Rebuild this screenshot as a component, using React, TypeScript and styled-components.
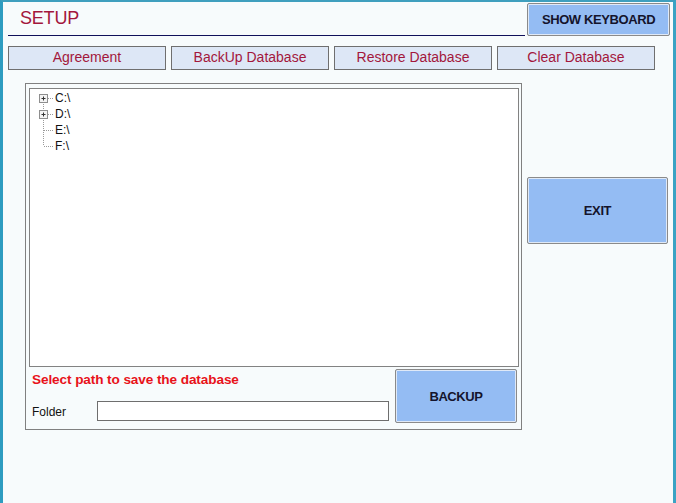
import React from 'react';
import styled, { createGlobalStyle } from 'styled-components';

const GlobalStyle = createGlobalStyle`
  html, body {
    margin: 0;
    padding: 0;
    background: #f7fafc;
  }
  * {
    box-sizing: border-box;
  }
`;

const ACCENT = '#a3173c';
const BUTTON_BLUE = '#94bcf3';

const Frame = styled.div`
  width: 676px;
  height: 503px;
  background: #f7fbfc;
  border-left: 3px solid #2e9cc0;
  border-right: 3px solid #3aa3c4;
  border-top: 2px solid #3f9fbe;
  font-family: 'Liberation Sans', Arial, sans-serif;
  display: flex;
  flex-direction: column;
`;

const Header = styled.div`
  display: flex;
  padding: 1px 0 0 5px;
`;

const TitleBlock = styled.div`
  width: 517px;
  height: 33px;
  border-bottom: 1px solid #10105a;
  padding: 5px 0 0 12px;
`;

const Title = styled.h1`
  margin: 0;
  color: ${ACCENT};
  font-size: 18px;
  font-weight: 400;
  letter-spacing: -0.2px;
`;

const BlueButton = styled.button<{ w: number; h: number }>`
  width: ${(p) => p.w}px;
  height: ${(p) => p.h}px;
  background: ${BUTTON_BLUE};
  border: 1px solid #8a8a8a;
  border-radius: 2px;
  box-shadow: inset 0 0 0 1px #dfe9f7;
  font-family: 'Liberation Sans', Arial, sans-serif;
  font-weight: 700;
  font-size: 13px;
  letter-spacing: -0.4px;
  color: #14142c;
  padding: 0;
  flex-shrink: 0;
`;

const KeyboardButton = styled(BlueButton)`
  margin-left: 2px;
`;

const Tabs = styled.div`
  display: flex;
  gap: 5px;
  padding-left: 5px;
  margin-top: 10px;
`;

const Tab = styled.button`
  width: 158px;
  height: 24px;
  background: #dde7f6;
  border: 1px solid #6f6f6f;
  color: ${ACCENT};
  font-family: 'Liberation Sans', Arial, sans-serif;
  font-size: 14px;
  padding: 0 0 3px;
`;

const Content = styled.div`
  display: flex;
  align-items: flex-start;
  margin-top: 13px;
  padding-left: 22px;
`;

const GroupBox = styled.div`
  width: 497px;
  height: 347px;
  border: 1px solid #808080;
  padding: 4px 2px 0 3px;
`;

const TreeBox = styled.div`
  width: 490px;
  height: 279px;
  background: #ffffff;
  border: 1px solid #828282;
  padding: 1px 0 0 5px;
`;

const TreeRow = styled.div`
  display: flex;
  align-items: center;
  height: 16px;
  font-family: 'Liberation Sans', Arial, sans-serif;
  font-size: 12px;
  color: #111;
`;

const TreeLabel = styled.span`
  margin-left: 2px;
`;

const Bottom = styled.div`
  display: flex;
  margin-top: 2px;
`;

const BottomLeft = styled.div`
  width: 366px;
  padding-left: 3px;
`;

const Hint = styled.div`
  color: #e8121a;
  font-weight: 700;
  font-size: 13.6px;
  letter-spacing: -0.1px;
  margin-top: 3px;
`;

const FolderRow = styled.div`
  display: flex;
  align-items: center;
  margin-top: 14px;
`;

const FolderLabel = styled.span`
  width: 65px;
  font-size: 12px;
  color: #111;
  padding-top: 2px;
`;

const FolderInput = styled.div`
  width: 292px;
  height: 20px;
  background: #fff;
  border: 1px solid #6e6e6e;
`;

const SideColumn = styled.div`
  padding: 94px 0 0 5px;
`;

type Node = { label: string; expandable: boolean };

const drives: Node[] = [
  { label: 'C:\\', expandable: true },
  { label: 'D:\\', expandable: true },
  { label: 'E:\\', expandable: false },
  { label: 'F:\\', expandable: false },
];

const Connector = ({ first, last, expandable }: { first: boolean; last: boolean; expandable: boolean }) => (
  <svg width="18" height="16" viewBox="0 0 18 16">
    <line
      x1="8.5"
      y1={first ? 8 : 0}
      x2="8.5"
      y2={last ? 8 : 16}
      stroke="#9a9a9a"
      strokeDasharray="1 1"
    />
    <line x1="9" y1="8.5" x2="18" y2="8.5" stroke="#9a9a9a" strokeDasharray="1 1" />
    {expandable && (
      <>
        <rect x="4.5" y="4.5" width="8" height="8" fill="#f4f4f4" stroke="#8e8e8e" />
        <line x1="6.5" y1="8.5" x2="10.5" y2="8.5" stroke="#333" />
        <line x1="8.5" y1="6.5" x2="8.5" y2="10.5" stroke="#333" />
      </>
    )}
  </svg>
);

export default function App() {
  return (
    <Frame>
      <GlobalStyle />
      <Header>
        <TitleBlock>
          <Title>SETUP</Title>
        </TitleBlock>
        <KeyboardButton w={143} h={33}>SHOW KEYBOARD</KeyboardButton>
      </Header>
      <Tabs>
        <Tab>Agreement</Tab>
        <Tab>BackUp Database</Tab>
        <Tab>Restore Database</Tab>
        <Tab>Clear Database</Tab>
      </Tabs>
      <Content>
        <GroupBox>
          <TreeBox>
            {drives.map((d, i) => (
              <TreeRow key={d.label}>
                <Connector first={i === 0} last={i === drives.length - 1} expandable={d.expandable} />
                <TreeLabel>{d.label}</TreeLabel>
              </TreeRow>
            ))}
          </TreeBox>
          <Bottom>
            <BottomLeft>
              <Hint>Select path to save the database</Hint>
              <FolderRow>
                <FolderLabel>Folder</FolderLabel>
                <FolderInput />
              </FolderRow>
            </BottomLeft>
            <BlueButton w={122} h={54}>BACKUP</BlueButton>
          </Bottom>
        </GroupBox>
        <SideColumn>
          <BlueButton w={141} h={67}>EXIT</BlueButton>
        </SideColumn>
      </Content>
    </Frame>
  );
}
